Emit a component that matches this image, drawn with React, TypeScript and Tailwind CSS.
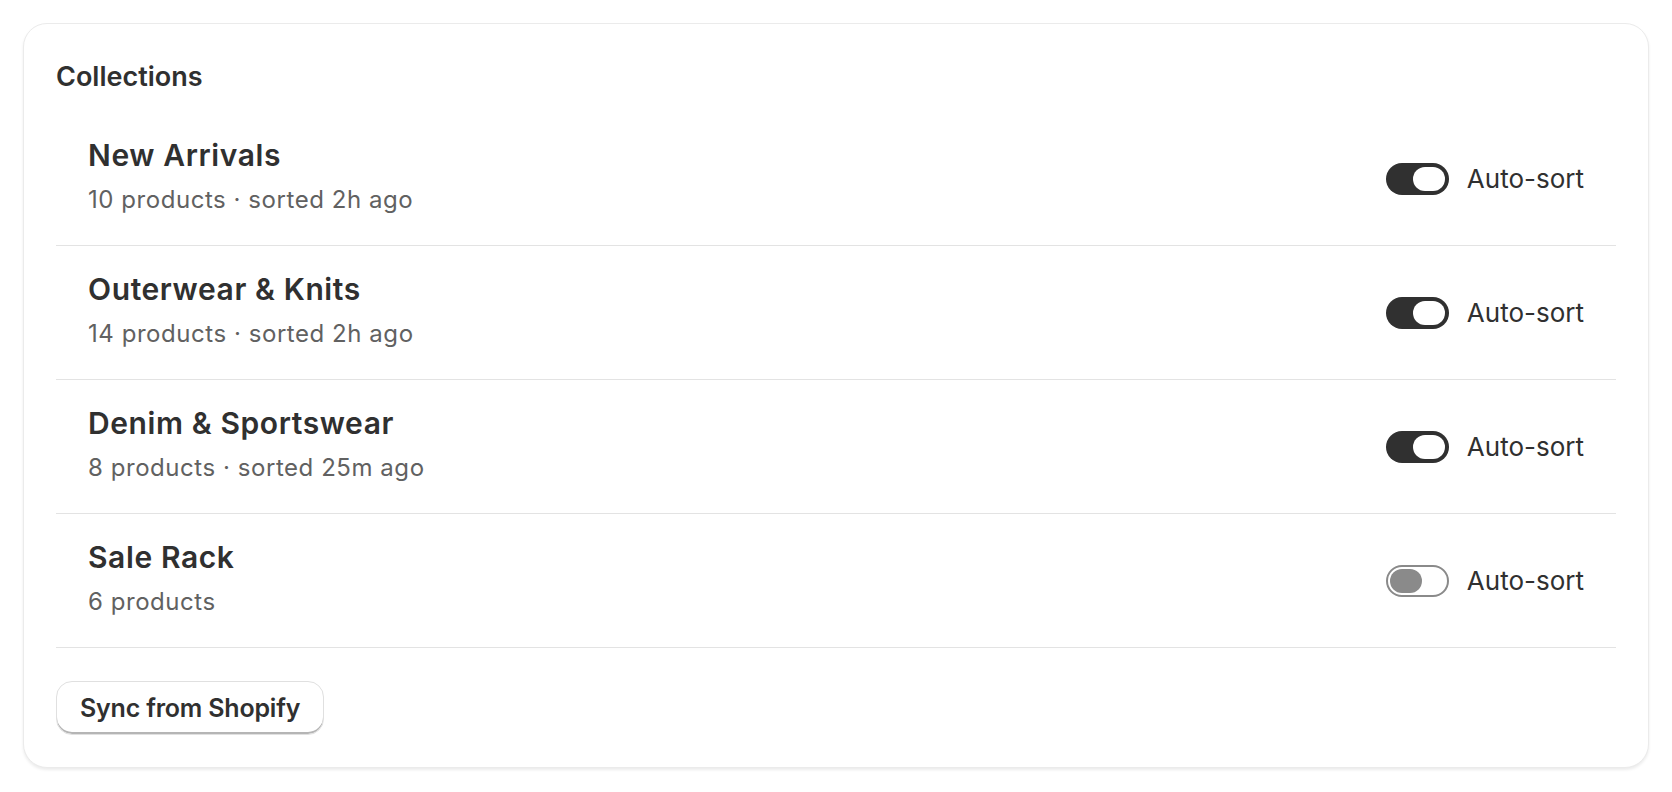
import { useState } from "react";

interface Collection {
  id: string;
  title: string;
  products: number;
  sortedAgo?: string;
  autoSort: boolean;
}

const initialCollections: Collection[] = [
  { id: "new-arrivals", title: "New Arrivals", products: 10, sortedAgo: "2h ago", autoSort: true },
  { id: "outerwear", title: "Outerwear & Knits", products: 14, sortedAgo: "2h ago", autoSort: true },
  { id: "denim", title: "Denim & Sportswear", products: 8, sortedAgo: "25m ago", autoSort: true },
  { id: "sale", title: "Sale Rack", products: 6, autoSort: false },
];

export default function App() {
  const [collections, setCollections] = useState(initialCollections);

  function toggle(id: string) {
    setCollections((prev) =>
      prev.map((c) => (c.id === id ? { ...c, autoSort: !c.autoSort } : c)),
    );
  }

  return (
    <div className="min-h-screen bg-white p-[23px] font-['Inter',sans-serif] text-[#303030]">
      <div className="rounded-[24px] border border-[#ebebeb] bg-white px-[32px] pt-[32px] pb-[32px] shadow-[0_2px_3px_0_rgba(0,0,0,0.08)]">
        {/* Header */}
        <h2 className="text-[27px] leading-[42px] font-semibold">Collections</h2>

        {/* Collection rows */}
        <ul className="mt-[14px]">
          {collections.map((c) => (
            <CollectionRow key={c.id} collection={c} onToggle={() => toggle(c.id)} />
          ))}
        </ul>

        <button
          type="button"
          className="mt-[33px] h-[54px] rounded-[16px] border border-[#e0e0e0] bg-white px-[23px] text-[25px] leading-[36px] font-semibold tracking-[-0.2px] text-[#303030] shadow-[inset_0_-2px_0_0_#b5b5b5]"
        >
          Sync from Shopify
        </button>
      </div>
    </div>
  );
}

function CollectionRow({ collection, onToggle }: { collection: Collection; onToggle: () => void }) {
  const meta = collection.sortedAgo
    ? `${collection.products} products · sorted ${collection.sortedAgo}`
    : `${collection.products} products`;

  return (
    <li className="flex h-[134px] items-center justify-between border-b border-[#e3e3e3] pl-[32px] pr-[32px]">
      <div className="mb-[5px]">
        <div className="text-[30px] leading-[36px] font-semibold tracking-[0.6px]">{collection.title}</div>
        <div className="mt-[11px] text-[24px] leading-[32px] tracking-[0.55px] text-[#616161]">{meta}</div>
      </div>

      <label className="flex cursor-pointer items-center gap-[18px]">
        <Toggle on={collection.autoSort} onClick={onToggle} />
        <span className="text-[26px] leading-[36px]">Auto-sort</span>
      </label>
    </li>
  );
}

function Toggle({ on, onClick }: { on: boolean; onClick: () => void }) {
  if (on) {
    return (
      <button
        type="button"
        role="switch"
        aria-checked="true"
        onClick={onClick}
        className="relative h-[32px] w-[63px] rounded-full bg-[#303030]"
      >
        <span className="absolute top-[4px] right-[4px] h-[24px] w-[32px] rounded-full bg-white" />
      </button>
    );
  }
  return (
    <button
      type="button"
      role="switch"
      aria-checked="false"
      onClick={onClick}
      className="relative h-[32px] w-[63px] rounded-full border-2 border-[#8a8a8a] bg-white"
    >
      <span className="absolute top-[2px] left-[2px] h-[24px] w-[32px] rounded-full bg-[#8a8a8a]" />
    </button>
  );
}
